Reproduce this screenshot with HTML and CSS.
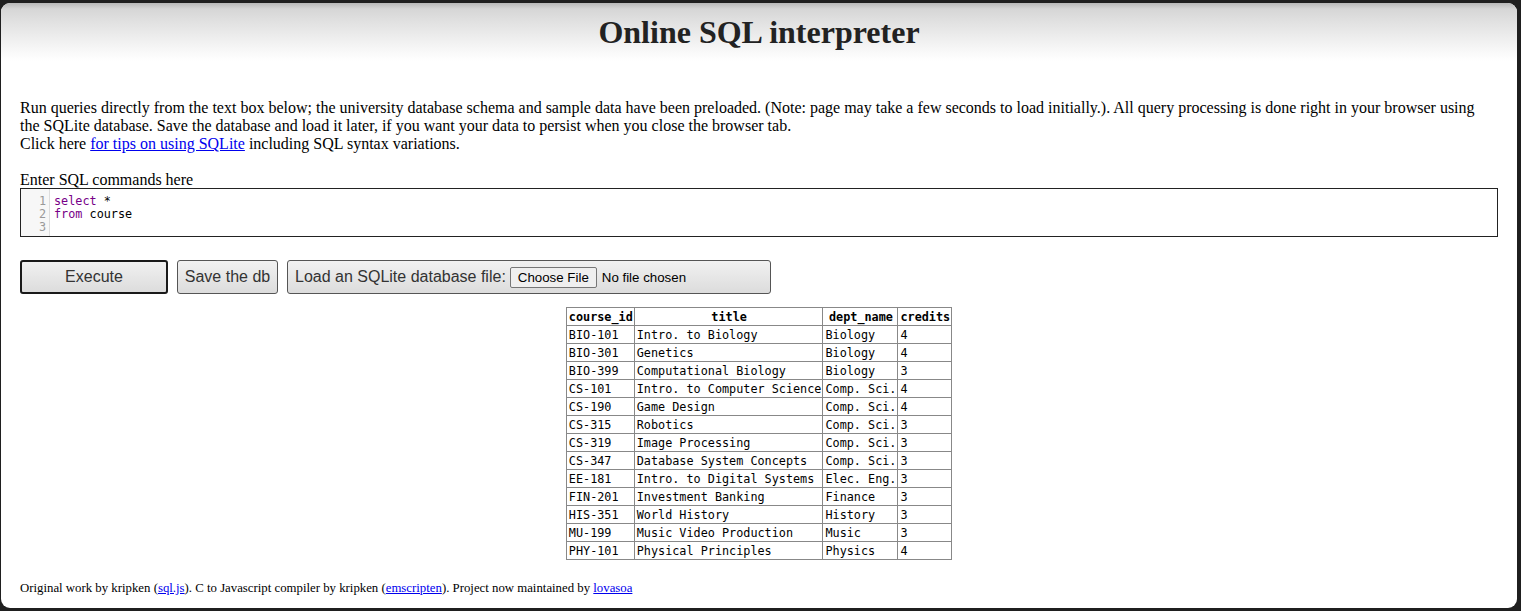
FILE: index.html
```html
<!DOCTYPE html>
<html>
<head>
<meta charset="utf-8">
<title>Online SQL interpreter</title>
<link rel="stylesheet" href="styles.css">
</head>
<body>
<div class="page">
  <header class="header"><h1>Online SQL interpreter</h1></header>
  <main class="content">
    <p class="intro">Run queries directly from the text box below; the university database schema and sample data have been preloaded. (Note: page may take a few seconds to load initially.). All query processing is done right in your browser using the SQLite database. Save the database and load it later, if you want your data to persist when you close the browser tab.<br>Click here <a href="#">for tips on using SQLite</a> including SQL syntax variations.</p>
    <label class="label">Enter SQL commands here</label>
    <div class="editor">
      <div class="gutter"><div>1</div><div>2</div><div>3</div></div>
      <div class="code"><div><span class="kw">select</span> *</div><div><span class="kw">from</span> course</div><div>&nbsp;</div></div>
    </div>
    <div class="buttons">
      <button class="btn btn-exec">Execute</button>
      <button class="btn btn-save">Save the db</button>
      <div class="btn btn-load">Load an SQLite database file: <span class="file"><span class="choose">Choose File</span><span class="nofile">No file chosen</span></span></div>
    </div>
    <div class="results">
      <table>
        <thead><tr><th>course_id</th><th>title</th><th>dept_name</th><th>credits</th></tr></thead>
        <tbody>
          <tr><td>BIO-101</td><td>Intro. to Biology</td><td>Biology</td><td>4</td></tr>
          <tr><td>BIO-301</td><td>Genetics</td><td>Biology</td><td>4</td></tr>
          <tr><td>BIO-399</td><td>Computational Biology</td><td>Biology</td><td>3</td></tr>
          <tr><td>CS-101</td><td>Intro. to Computer Science</td><td>Comp. Sci.</td><td>4</td></tr>
          <tr><td>CS-190</td><td>Game Design</td><td>Comp. Sci.</td><td>4</td></tr>
          <tr><td>CS-315</td><td>Robotics</td><td>Comp. Sci.</td><td>3</td></tr>
          <tr><td>CS-319</td><td>Image Processing</td><td>Comp. Sci.</td><td>3</td></tr>
          <tr><td>CS-347</td><td>Database System Concepts</td><td>Comp. Sci.</td><td>3</td></tr>
          <tr><td>EE-181</td><td>Intro. to Digital Systems</td><td>Elec. Eng.</td><td>3</td></tr>
          <tr><td>FIN-201</td><td>Investment Banking</td><td>Finance</td><td>3</td></tr>
          <tr><td>HIS-351</td><td>World History</td><td>History</td><td>3</td></tr>
          <tr><td>MU-199</td><td>Music Video Production</td><td>Music</td><td>3</td></tr>
          <tr><td>PHY-101</td><td>Physical Principles</td><td>Physics</td><td>4</td></tr>
        </tbody>
      </table>
    </div>
    <footer class="footer">Original work by kripken (<a href="#">sql.js</a>). C to Javascript compiler by kripken (<a href="#">emscripten</a>). Project now maintained by <a href="#">lovasoa</a></footer>
  </main>
</div>
</body>
</html>
```
FILE: styles.css
```css
html, body {
  margin: 0;
  padding: 0;
  height: 100%;
}
body {
  background: #1f1f1f;
  padding: 3px 4px 3px 1px;
  box-sizing: border-box;
  font-family: "Liberation Serif", "Times New Roman", serif;
  color: #000;
}
.page {
  background: #fff;
  border-radius: 9px;
  height: 605px;
  overflow: hidden;
}
.header {
  height: 60px;
  background: linear-gradient(to bottom, #b8b8b8 0px, #d6d6d6 6px, #e2e2e2 20px, #f6f6f6 45px, #fff 58px);
  display: flex;
  justify-content: center;
}
.header h1 {
  margin: 0;
  padding-top: 11px;
  font-size: 32px;
  font-weight: bold;
  color: #222;
  line-height: 37px;
}
.content {
  padding: 36px 19px 0 19px;
}
.intro {
  margin: 0;
  font-size: 16px;
  line-height: 18px;
}
a { color: #00e; }
.label {
  display: block;
  margin-top: 18px;
  font-size: 16px;
  line-height: 17px;
}
.editor {
  border: 1px solid #222;
  height: 47px;
  display: flex;
  font-family: "DejaVu Sans Mono", monospace;
  font-size: 11.8px;
  line-height: 13px;
}
.gutter {
  background: #f7f7f7;
  border-right: 1px solid #ddd;
  color: #999;
  padding: 6px 3px 0 0;
  text-align: right;
  width: 25px;
}
.code {
  padding: 6px 4px 0 4px;
  color: #000;
}
.kw { color: #708; }
.buttons {
  margin-top: 23px;
  display: flex;
  gap: 9px;
  align-items: center;
}
.btn {
  font-family: "Liberation Sans", Arial, sans-serif;
  font-size: 16px;
  color: #333;
  background: linear-gradient(to bottom, #f1f1f1, #dcdcdc);
  border: 1px solid #555;
  border-radius: 3px;
  height: 34px;
  box-sizing: border-box;
  padding: 0 7px;
  display: flex;
  align-items: center;
  white-space: nowrap;
}
.btn-exec {
  width: 148px;
  justify-content: center;
  border: 2px solid #1a1a1a;
}
.btn-save {
  width: 101px;
  padding: 0 6px;
  justify-content: center;
}
.btn-load {
  width: 484px;
  gap: 4px;
}
.file {
  display: flex;
  align-items: center;
  gap: 5px;
  font-size: 13.3px;
  color: #000;
}
.choose {
  background: #efefef;
  border: 1px solid #767676;
  border-radius: 2px;
  padding: 1px 7px;
  height: 21px;
  box-sizing: border-box;
  display: flex;
  align-items: center;
}
.results {
  display: flex;
  justify-content: center;
  margin-top: 13px;
}
table {
  border-collapse: collapse;
  font-family: "DejaVu Sans Mono", "Liberation Mono", monospace;
  font-size: 11.8px;
  color: #000;
}
th, td {
  border: 1px solid #888;
  padding: 1px 1px 0 2px;
  height: 16px;
  line-height: 16px;
  text-align: left;
  white-space: nowrap;
  vertical-align: bottom;
}
th {
  text-align: center;
  font-weight: bold;
}
.footer {
  margin-top: 21px;
  font-size: 12.8px;
  line-height: 15px;
}
```
